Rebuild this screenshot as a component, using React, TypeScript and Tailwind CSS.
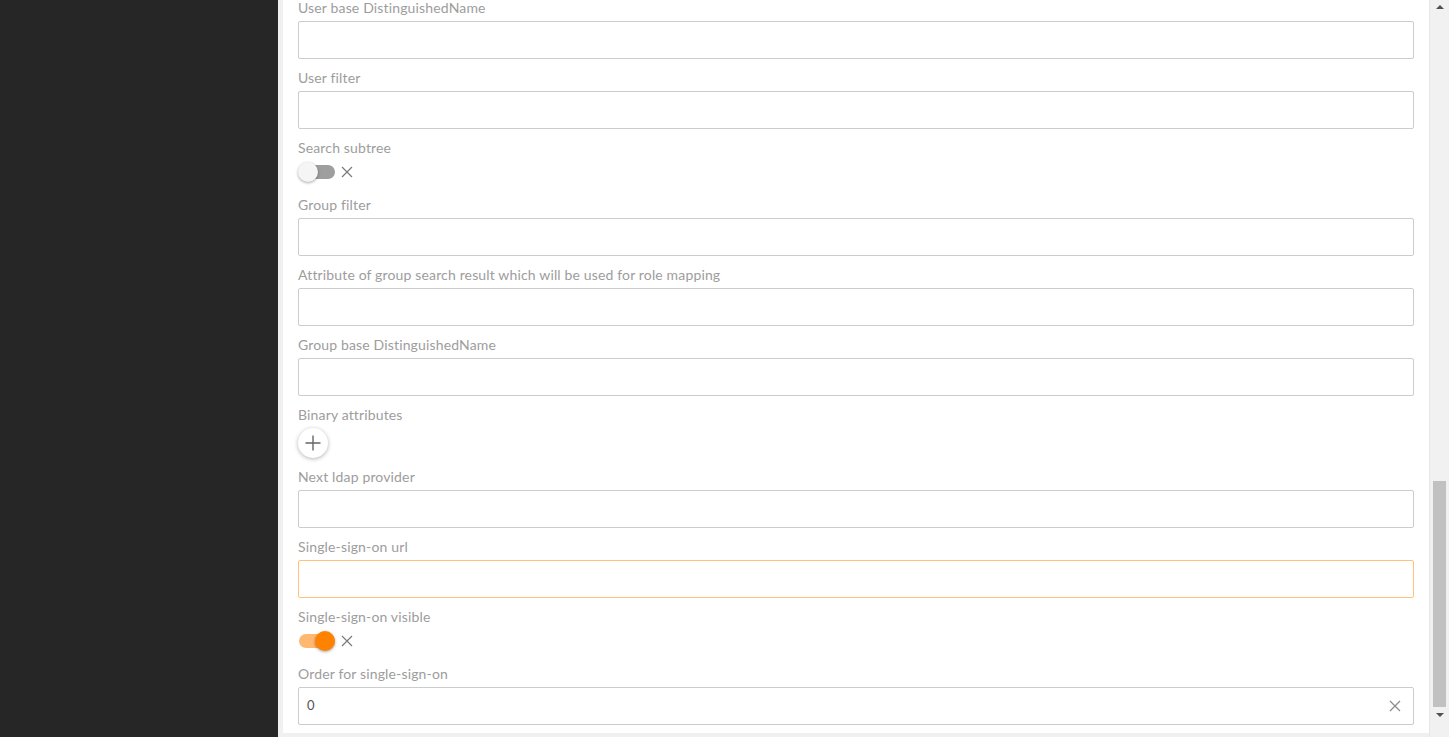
import React from 'react';

const XIcon = ({ className }: { className?: string }) => (
  <svg viewBox="0 0 12 12" className={className} fill="none" stroke="currentColor" strokeWidth="1.2">
    <path d="M1 1L11 11M11 1L1 11" />
  </svg>
);

const Label = ({ text }: { text: string }) => (
  <div className="h-[18px] leading-[18px] text-[14px] tracking-[0.15px] text-[#9d9d9d]">{text}</div>
);

const TextField = ({ label, focused, value, clearable }: { label: string; focused?: boolean; value?: string; clearable?: boolean }) => (
  <div className="mb-[10px]">
    <Label text={label} />
    <div
      className={`mt-[4px] h-[38px] flex items-center px-[8px] border rounded-[2px] bg-white ${
        focused ? 'border-[#ffc27d]' : 'border-[#cccccc]'
      }`}
    >
      <span className="flex-1 text-[13px] text-[#555555]">{value}</span>
      {clearable && <XIcon className="w-[12px] h-[12px] text-[#8a8a8a] mr-[4px]" />}
    </div>
  </div>
);

const Toggle = ({ label, on }: { label: string; on?: boolean }) => (
  <div className="mb-[12px]">
    <Label text={label} />
    <div className="mt-[3px] h-[24px] flex items-center">
      <div className="relative w-[38px] h-[24px] flex items-center">
        <div className={`ml-[1px] w-[36px] h-[14px] rounded-full ${on ? 'bg-[#ffb870]' : 'bg-[#9e9e9e]'}`} />
        <div
          className={`absolute top-[2px] w-[20px] h-[20px] rounded-full shadow-[0_1px_3px_rgba(0,0,0,0.35)] ${
            on ? 'left-[17px] bg-[#ff8200]' : 'left-0 bg-[#f5f5f5]'
          }`}
        />
      </div>
      <XIcon className="ml-[5px] w-[12px] h-[12px] text-[#7a7a7a]" />
    </div>
  </div>
);

export default function App() {
  return (
    <div className="w-[1449px] h-[737px] flex bg-[#f0f0f0] overflow-hidden" style={{ fontFamily: 'Lato, "Open Sans", sans-serif' }}>
      <div className="w-[278px] h-full bg-[#262626]" />
      <div className="ml-[5px] w-[1146px] h-[733px] bg-white overflow-hidden">
        <div className="pl-[15px] pr-[15px] mt-[-1px]">
          <TextField label="User base DistinguishedName" />
          <TextField label="User filter" />
          <Toggle label="Search subtree" />
          <TextField label="Group filter" />
          <TextField label="Attribute of group search result which will be used for role mapping" />
          <TextField label="Group base DistinguishedName" />
          <div className="mb-[10px]">
            <Label text="Binary attributes" />
            <div className="mt-[4px] h-[30px] w-[30px] rounded-full bg-white shadow-[0_1px_4px_rgba(0,0,0,0.3)] flex items-center justify-center">
              <svg viewBox="0 0 16 16" className="w-[16px] h-[16px] text-[#666666]" fill="none" stroke="currentColor" strokeWidth="1.4">
                <path d="M8 0.5V15.5M0.5 8H15.5" />
              </svg>
            </div>
          </div>
          <TextField label="Next ldap provider" />
          <TextField label="Single-sign-on url" focused />
          <Toggle label="Single-sign-on visible" on />
          <TextField label="Order for single-sign-on" value="0" clearable />
        </div>
      </div>
      <div className="w-[20px] h-full bg-[#f1f1f1] border-l border-[#e6e6e6] flex flex-col items-center">
        <div className="h-[14px] flex items-center justify-center">
          <div className="w-0 h-0 border-l-[4px] border-r-[4px] border-b-[4px] border-l-transparent border-r-transparent border-b-[#505050]" />
        </div>
        <div className="flex-1 w-full px-[3px] flex flex-col">
          <div className="h-[467px]" />
          <div className="h-[226px] bg-[#c1c1c1]" />
        </div>
        <div className="h-[30px] flex items-start pt-[6px] justify-center">
          <div className="w-0 h-0 border-l-[4px] border-r-[4px] border-t-[4px] border-l-transparent border-r-transparent border-t-[#505050]" />
        </div>
      </div>
    </div>
  );
}
